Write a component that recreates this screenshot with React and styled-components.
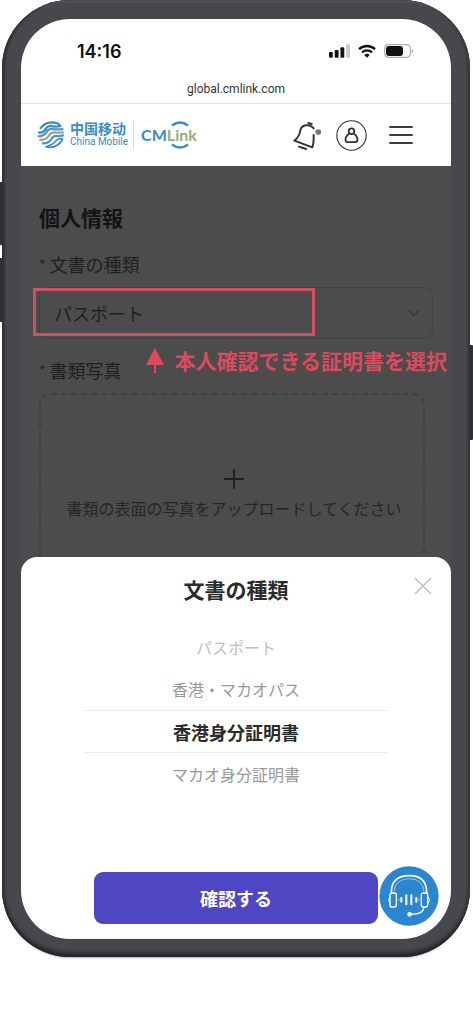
import React, { useState } from "react";
import styled, { createGlobalStyle } from "styled-components";

const GlobalStyle = createGlobalStyle`
  * {
    box-sizing: border-box;
  }

  body {
    margin: 0;
    background: #fff;
    font-family: "Noto Sans CJK JP", sans-serif;
  }

  button,
  select {
    font-family: inherit;
  }
`;

const Stage = styled.div`
  padding: 0 3px 64px 2px;
`;

const Phone = styled.div`
  position: relative;
  padding: 19px 19px 18px;

  background: #47484d;
  border-radius: 68px;
  box-shadow: inset 0 -5px 4px -1px #242426, inset 3px 0 2px #343639,
    inset -3px 0 2px #3e3f44, inset 0 2px 2px #5c5d62,
    0 3px 3px -3px rgba(0, 0, 0, 0.6);
`;

const SideKey = styled.span`
  position: absolute;
  top: ${(props) => props.$top}px;
  ${(props) => props.$side}: -3px;

  width: 4px;
  height: ${(props) => props.$size}px;

  background: #2f3133;
  border-radius: 1px;
`;

const Screen = styled.div`
  overflow: hidden;

  background: #4c4c4c;
  border-radius: 49px;
`;

const StatusBar = styled.div`
  height: 60px;
  padding: 4px 37px 0 56px;

  display: flex;
  justify-content: space-between;
  align-items: center;

  background: #fff;
`;

const Clock = styled.span`
  color: #111;
  font-family: Inter, sans-serif;
  font-size: 18px;
  font-weight: 600;
`;

const StatusIcons = styled.div`
  display: flex;
  align-items: center;
  gap: 8px;
`;

const AddressBar = styled.div`
  padding-bottom: 4px;

  background: #fff;
  border-bottom: 1px solid #e2e2e2;

  color: #333;
  font-family: Roboto, sans-serif;
  font-size: 12px;
  line-height: 20px;
  text-align: center;
`;

const Header = styled.header`
  height: 62px;
  padding: 0 38px 0 16px;

  display: flex;
  justify-content: space-between;
  align-items: center;

  background: #fff;
`;

const Brand = styled.a`
  display: flex;
  align-items: center;

  color: #3b8cc8;
  text-decoration: none;
`;

const BrandNames = styled.span`
  margin-left: 5px;
  padding-right: 5px;

  display: flex;
  flex-direction: column;

  border-right: 1px solid #dcdcdc;
`;

const ChineseName = styled.span`
  font-family: "Noto Sans CJK SC", sans-serif;
  font-size: 14px;
  font-weight: 700;
  line-height: 14px;
`;

const EnglishName = styled.span`
  font-family: Roboto, sans-serif;
  font-size: 10px;
  font-weight: 400;
  line-height: 14px;
`;

const LinkLogo = styled.span`
  position: relative;
  margin-left: 7px;

  font-family: Lato, sans-serif;
  font-size: 16px;
  font-weight: 700;
  line-height: 28px;

  em {
    color: #9aab78;
    font-style: normal;
  }

  svg {
    position: absolute;
    top: 0;
    right: 8px;
  }
`;

const HeaderActions = styled.div`
  display: flex;
  align-items: center;
`;

const IconButton = styled.button`
  margin-left: ${(props) => props.$gap || 0}px;
  padding: 0;

  display: flex;

  background: none;
  border: 0;
  cursor: pointer;
`;

const Form = styled.main`
  position: relative;
  padding: 35px 18px 0;
`;

const FormTitle = styled.h1`
  margin: 0 0 17px;

  color: #141414;
  font-size: 21px;
  font-weight: 700;
  line-height: 32px;
`;

const FieldLabel = styled.label`
  margin-bottom: 9px;

  display: flex;
  gap: 4px;

  color: #1f1f1f;
  font-size: 18px;
  line-height: 28px;
`;

const Required = styled.span`
  color: #222;
  font-size: 14px;
  line-height: 28px;
`;

const SelectBox = styled.div`
  margin-bottom: 17px;
  padding-right: 12px;

  display: flex;
  align-items: center;

  border: 1px solid #404040;
  border-radius: 9px;
`;

const Select = styled.select`
  flex: 1;
  height: 50px;
  padding: 0 14px;

  appearance: none;
  background: none;
  border: 0;

  color: #1f1f1f;
  font-size: 18px;
`;

const Upload = styled.button`
  width: calc(100% - 8px);
  height: 164px;
  padding: 73px 0 0 4px;

  display: flex;
  flex-direction: column;
  align-items: center;
  gap: 6px;

  background: none;
  border: 2px dashed #404040;
  border-bottom: 0;
  border-radius: 12px 12px 0 0;

  color: #262626;
  font-size: 16px;
  line-height: 24px;
  white-space: nowrap;
`;

const Highlight = styled.div`
  position: absolute;
  top: 122px;
  left: 12px;

  width: 282px;
  height: 48px;

  border: 3px solid #cf5264;
`;

const Hint = styled.div`
  position: absolute;
  top: 180px;
  right: 4px;

  display: flex;
  align-items: center;
  gap: 10px;

  color: #dc4a60;
  font-size: 21px;
  font-weight: 700;
  line-height: 28px;
  white-space: nowrap;
`;

const Sheet = styled.section`
  position: relative;
  padding: 16px 12px 13px;

  background: #fff;
  border-radius: 16px 16px 0 0;
`;

const SheetTitle = styled.h2`
  margin: 0 0 21px;

  color: #2b2b2b;
  font-size: 21px;
  font-weight: 700;
  line-height: 32px;
  text-align: center;
`;

const CloseButton = styled.button`
  position: absolute;
  top: 20px;
  right: 19px;
  padding: 0;

  display: flex;

  background: none;
  border: 0;
  cursor: pointer;
`;

const Options = styled.div`
  margin: 0 51px 71px;
`;

const Option = styled.label`
  height: ${(props) => (props.$selected ? 43 : 42)}px;

  display: flex;
  justify-content: center;
  align-items: center;

  border: solid #ebebeb;
  border-width: ${(props) => (props.$selected ? "1px 0" : "0")};

  color: ${(props) => props.$color};
  font-size: ${(props) => (props.$selected ? 18 : 16)}px;
  font-weight: ${(props) => (props.$selected ? 700 : 400)};

  input {
    position: absolute;
    opacity: 0;
  }
`;

const SheetFooter = styled.div`
  padding-left: 61px;

  display: flex;
  align-items: flex-end;
  gap: 1px;
`;

const ConfirmButton = styled.button`
  flex: 1;
  height: 52px;
  margin: 0 0 2px;

  background: #4f46c3;
  border: 0;
  border-radius: 9px;

  color: #fff;
  font-size: 18px;
  font-weight: 700;
`;

const SignalIcon = () => (
  <svg width="21" height="14" viewBox="0 0 22 14">
    <rect x="0" y="8" width="4" height="6" rx="1" fill="#111" />
    <rect x="6" y="6" width="4" height="8" rx="1" fill="#111" />
    <rect x="12" y="3" width="4" height="11" rx="1" fill="#111" />
    <rect x="18" y="0" width="4" height="14" rx="1" fill="#c5ccd4" />
  </svg>
);

const WifiIcon = () => (
  <svg width="18" height="14" viewBox="0 0 18 14" fill="none">
    <path d="M1 5.2a11.6 11.6 0 0 1 16 0" stroke="#111" strokeWidth="2.4" />
    <path d="M4 8.4a7.4 7.4 0 0 1 10 0" stroke="#111" strokeWidth="2.2" />
    <path d="M6.3 11a4.2 4.2 0 0 1 5.4 0L9 13.8z" fill="#111" />
  </svg>
);

const BatteryIcon = () => (
  <svg width="30" height="14" viewBox="0 0 30 14">
    <rect
      x="0.6"
      y="0.6"
      width="25.8"
      height="12.8"
      rx="4"
      fill="#fff"
      stroke="#a9b3a3"
      strokeWidth="1.2"
    />
    <rect x="2" y="2" width="17" height="10" rx="3" fill="#111" />
    <path d="M27.8 5v4q1.6-.6 1.6-2t-1.6-2z" fill="#a9b3a3" />
  </svg>
);

const MobileMark = () => (
  <svg width="28" height="28" viewBox="110 362 86 86" fill="none">
    <g strokeWidth="7" strokeLinecap="round" strokeLinejoin="round">
      <path
        d="M121 384q12-17 34-18q20 0 27 12q-18 3-30-1q-12 1-18 13q-5 8-18 8"
        stroke="#3b8cc8"
      />
      <path
        d="M115 409q16 0 23-12q6-11 17-11q14 3 33 1"
        stroke="#4b97cb"
      />
      <path
        d="M120 420q19 0 26-12q6-11 17-11q13 2 27 0"
        stroke="#9aab78"
      />
      <path
        d="M128 431q18-1 25-12q6-11 17-11q10 1 20-2"
        stroke="#4b97cb"
      />
      <path
        d="M137 441q20 6 37-6q13-9 14-19q-14-1-20 7q-7 11-31 18z"
        stroke="#3b8cc8"
        strokeWidth="5"
      />
    </g>
  </svg>
);

const LinkArcs = () => (
  <svg width="18" height="28" viewBox="0 0 18 28" fill="none">
    <path d="M1 4.5q8-6 16 0" stroke="#3b8cc8" strokeWidth="2.2" />
    <path d="M1 23.5q8 6 16 0" stroke="#3b8cc8" strokeWidth="2.2" />
  </svg>
);

const BellIcon = () => (
  <svg width="29" height="29" viewBox="180 360 87 87" fill="none">
    <g stroke="#333" strokeWidth="6" strokeLinecap="round">
      <path
        d="M242 382q-6-7-15-9q-19-3-25 14q-2 20-18 32l54 20q5-14 4-37"
        strokeLinejoin="round"
      />
      <path d="M226 366l10 3M198 437l21 7" />
    </g>
    <circle cx="256" cy="393" r="8.5" fill="#777" />
  </svg>
);

const UserIcon = () => (
  <svg width="31" height="31" viewBox="0 0 31 31" fill="none" stroke="#333">
    <circle cx="15.5" cy="15.5" r="14.7" strokeWidth="1.1" />
    <g strokeWidth="1.8">
      <circle cx="15.5" cy="11.2" r="2.8" />
      <path
        d="M13 13.8q-3.6 2.6-3.5 6.4q.2 1.9 2 1.9h8q1.8 0 2-1.9q.1-3.8-3.5-6.4"
        strokeLinejoin="round"
      />
    </g>
  </svg>
);

const MenuIcon = () => (
  <svg width="24" height="20" viewBox="0 0 24 20">
    <path
      d="M1 2h22M1 10h22M1 18h22"
      stroke="#3c3c3c"
      strokeWidth="2"
      strokeLinecap="round"
    />
  </svg>
);

const ChevronIcon = () => (
  <svg width="12" height="10" viewBox="0 0 12 10" fill="none">
    <path d="M1 2l5 6l5-6" stroke="#393939" strokeWidth="1.4" />
  </svg>
);

const PlusIcon = () => (
  <svg width="22" height="22" viewBox="0 0 22 22">
    <path d="M11 1v20M1 11h20" stroke="#1f1f1f" strokeWidth="1.8" />
  </svg>
);

const ArrowIcon = () => (
  <svg width="18" height="25" viewBox="0 0 18 25">
    <path d="M9 0l9 17H0z" fill="#dc4a60" />
    <path d="M9 15v10" stroke="#dc4a60" strokeWidth="2" />
  </svg>
);

const CloseIcon = () => (
  <svg width="18" height="18" viewBox="0 0 18 18">
    <path d="M1 1l16 16M17 1L1 17" stroke="#bcc4d0" strokeWidth="1.6" />
  </svg>
);

const HeadsetIcon = () => (
  <svg width="60" height="60" viewBox="118 80 180 180" fill="none">
    <circle cx="208" cy="170" r="89" fill="#2b85d0" />
    <g stroke="#fff" strokeLinecap="round">
      <path d="M155 160q0-51 54-51q52 0 52 51" strokeWidth="5" />
      <path
        d="M163 155q4-36 46-37q40 1 44 37"
        strokeWidth="2"
        opacity="0.8"
      />
      <rect x="151" y="161" width="19" height="42" rx="6" strokeWidth="4" />
      <rect x="245" y="161" width="19" height="42" rx="6" strokeWidth="4" />
      <path d="M150 172q-7 8 0 19M266 172q7 8 0 19" strokeWidth="3" />
      <path d="M253 204q-3 22-42 21" strokeWidth="4" />
      <path d="M185 175v12M230 175v12" strokeWidth="6" />
      <path d="M200 168v27M215 168v27" strokeWidth="6" />
      <path d="M177 179v4M238 179v4" strokeWidth="3" opacity="0.7" />
    </g>
    <circle cx="210" cy="225" r="7" fill="#fff" />
  </svg>
);

const documents = [
  { name: "パスポート", color: "#bcc1c1" },
  { name: "香港・マカオパス", color: "#999" },
  { name: "香港身分証明書", color: "#2b2b2b" },
  { name: "マカオ身分証明書", color: "#999" },
];

const App = () => {
  const [picked, setPicked] = useState("香港身分証明書");

  return (
    <Stage>
      <GlobalStyle />
      <Phone>
        <SideKey $side="left" $top={182} $size={63} />
        <SideKey $side="left" $top={258} $size={64} />
        <SideKey $side="right" $top={345} $size={95} />
        <Screen>
          <StatusBar>
            <Clock>14:16</Clock>
            <StatusIcons>
              <SignalIcon />
              <WifiIcon />
              <BatteryIcon />
            </StatusIcons>
          </StatusBar>
          <AddressBar>global.cmlink.com</AddressBar>
          <Header>
            <Brand href="#">
              <MobileMark />
              <BrandNames>
                <ChineseName>中国移动</ChineseName>
                <EnglishName>China Mobile</EnglishName>
              </BrandNames>
              <LinkLogo>
                CM<em>Link</em>
                <LinkArcs />
              </LinkLogo>
            </Brand>
            <HeaderActions>
              <IconButton aria-label="お知らせ">
                <BellIcon />
              </IconButton>
              <IconButton aria-label="アカウント" $gap={14}>
                <UserIcon />
              </IconButton>
              <IconButton aria-label="メニュー" $gap={22}>
                <MenuIcon />
              </IconButton>
            </HeaderActions>
          </Header>

          <Form>
            <FormTitle>個人情報</FormTitle>
            <FieldLabel htmlFor="document">
              <Required>*</Required>文書の種類
            </FieldLabel>
            <SelectBox>
              <Select id="document" defaultValue="パスポート">
                {documents.map(({ name }) => (
                  <option key={name}>{name}</option>
                ))}
              </Select>
              <ChevronIcon />
            </SelectBox>
            <FieldLabel htmlFor="photo">
              <Required>*</Required>書類写真
            </FieldLabel>
            <Upload id="photo" type="button">
              <PlusIcon />
              書類の表面の写真をアップロードしてください
            </Upload>
            <Highlight />
            <Hint>
              <ArrowIcon />
              本人確認できる証明書を選択
            </Hint>
          </Form>

          <Sheet>
            <SheetTitle>文書の種類</SheetTitle>
            <CloseButton aria-label="閉じる">
              <CloseIcon />
            </CloseButton>
            <Options role="radiogroup" aria-label="文書の種類">
              {documents.map(({ name, color }) => (
                <Option key={name} $color={color} $selected={name === picked}>
                  <input
                    type="radio"
                    name="picker"
                    checked={name === picked}
                    onChange={() => setPicked(name)}
                  />
                  {name}
                </Option>
              ))}
            </Options>
            <SheetFooter>
              <ConfirmButton>確認する</ConfirmButton>
              <IconButton aria-label="チャット">
                <HeadsetIcon />
              </IconButton>
            </SheetFooter>
          </Sheet>
        </Screen>
      </Phone>
    </Stage>
  );
};

export default App;
